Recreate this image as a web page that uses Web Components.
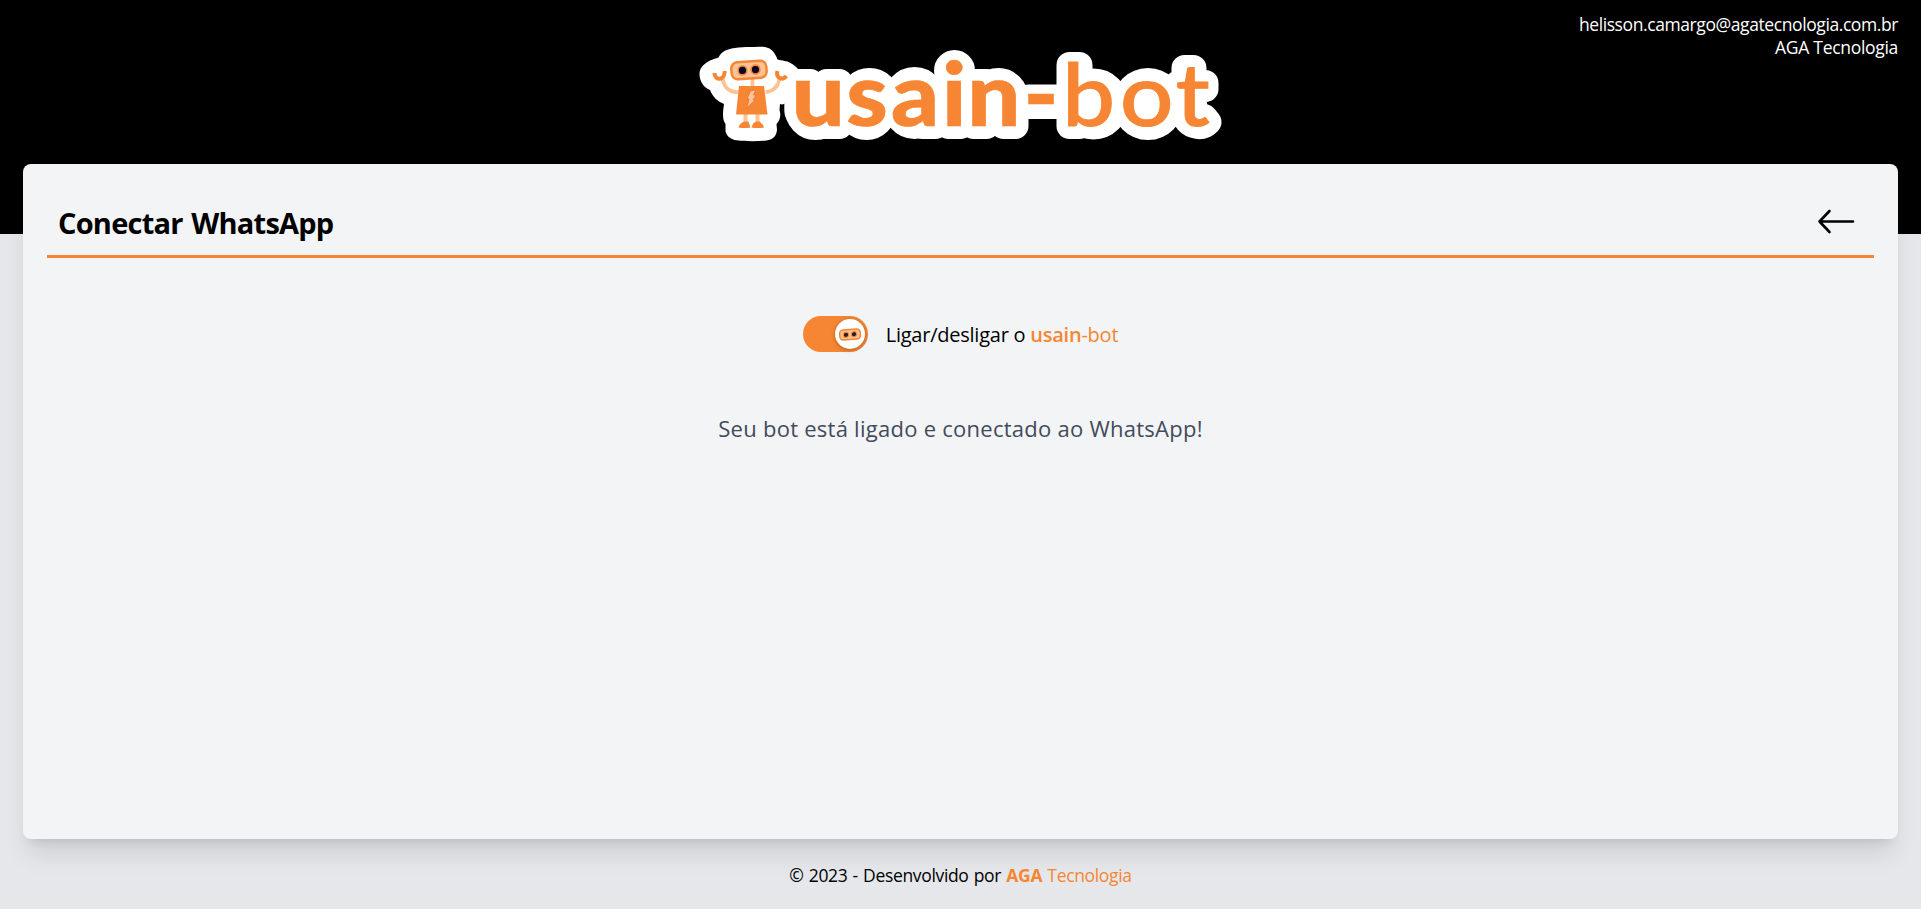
<!DOCTYPE html>
<html lang="pt-BR">
<head>
<meta charset="utf-8">
<title>usain-bot</title>
<style>
html, body { margin: 0; height: 100%; }
body { font-family: "Open Sans", "Noto Sans", sans-serif; background: #e5e7eb; color: #000; overflow: hidden; }
.semi { font-weight: 600; }
</style>
</head>
<body>
<usain-app>
  <user-info slot="user"><span>helisson.camargo@agatecnologia.com.br</span><span slot="company">AGA Tecnologia</span></user-info>
  <usain-logo slot="logo"></usain-logo>
  <page-card>
    <span slot="title">Conectar WhatsApp</span>
    <bot-switch>Ligar/desligar o <brand-name><b class="semi" slot="strong">usain</b>-bot</brand-name></bot-switch>
    <status-message>Seu bot está ligado e conectado ao WhatsApp!</status-message>
  </page-card>
  <page-footer slot="footer">© 2023 - Desenvolvido por <brand-name><b slot="strong">AGA</b> Tecnologia</brand-name></page-footer>
</usain-app>
<script>
const define = (name, html) => customElements.define(name, class extends HTMLElement {
  constructor() {
    super();
    const t = document.createElement('template');
    t.innerHTML = html;
    this.attachShadow({ mode: 'open' }).append(t.content.cloneNode(true));
  }
});

define('usain-app', `
<style>
:host { display: flex; flex-direction: column; height: 909px; box-sizing: border-box; padding: 0 23px;
  background: linear-gradient(#000 234px, #e5e7eb 234px); }
header { display: grid; grid-template-columns: 1fr 524px 1fr; height: 164px; flex: none; }
.logo { grid-column: 2; padding-top: 46px; }
.user { padding-top: 13px; }
main { display: flex; height: 675px; flex: none; }
footer { flex: 1; }
</style>
<header><div class="logo"><slot name="logo"></slot></div><div class="user"><slot name="user"></slot></div></header>
<main><slot></slot></main>
<footer><slot name="footer"></slot></footer>`);

define('user-info', `
<style>
:host { display: flex; flex-direction: column; align-items: flex-end; color: #fff; font-size: 17.500px; line-height: 23px; white-space: nowrap; }
.mail { letter-spacing: -.41px; }
.company { letter-spacing: -.3px; }
</style>
<div class="mail"><slot></slot></div><div class="company"><slot name="company"></slot></div>`);

define('usain-logo', `
<style>
:host { display: block; height: 96px; }
svg { display: block; overflow: visible; }
text { font-family: Lato, sans-serif; font-size: 87px; fill: #f68633; stroke: #f68633; }
.bold { font-weight: 900; stroke-width: .6; }
.light { font-weight: 500; stroke-width: 1; }
</style>
<svg width="524" height="96" viewBox="698.500 46 524 96">
  <g fill="#fff" stroke="#fff" stroke-width="26" stroke-linejoin="round">
    <path d="M797 82h13v30h-13zM826 82h13v44h-13z"/><ellipse cx="815" cy="108" rx="18" ry="19"/>
    <ellipse cx="869" cy="97" rx="17" ry="16"/><ellipse cx="866" cy="110" rx="17" ry="17"/>
    <ellipse cx="914" cy="103" rx="20" ry="23"/><path d="M922 97h13v29h-13z"/>
    <circle cx="954" cy="70.500" r="7.500"/><path d="M948 82h12v44h-12z"/>
    <path d="M973 82h13v44h-13zM1003 101h12v25h-12z"/><ellipse cx="998" cy="99" rx="17" ry="18"/>
    <path d="M1028 97.500h28v8.500h-28z"/><path d="M1069 65h10v61h-10z"/><circle cx="1093" cy="104" r="22.500"/>
    <circle cx="1147.500" cy="104" r="23"/>
    <path d="M1184 68h9v15h12v6h-12l1 26q2 6 10 2l4 5q-5 5-11 4-13-2-13-15V89h-6v-6h6z"/>
  </g>
  <path fill="#fff" d="M699 74C699 69 702 65 707 62C712 59 714 59 718 57.500C720 53 724 50 731 48.500C740 47 752 47 762 46.800C769 47 774 51 777 59.500C782 61 786 60.500 790 63C794 65 797 68 799 71L799 100L787 102C784 104 782 105 779.500 104L779 110C781 116 779 121 776 124L776.500 130C776 135 773 140 766 140.500C756 141.500 744 141.500 734 140C729 138 726 136 725 131L725 124C722 120 722 114 723.500 104C718 102 712 97 709.500 90C704 88 699 82 699 74Z"/>
  <g fill="none">
    <path d="M722 79c2 9 8 14 16 13M777 84c-2 5-7 8-12 8M752 78v8" stroke="#fdc397" stroke-width="3.800"/>
    <path d="M775 88c3-3 3-6 4-10" stroke="#fdc397" stroke-width="3.500"/>
    <path d="M745 114v10M757 114v10" stroke="#fdc397" stroke-width="4"/>
    <path d="M714 73c0 8 11 8 10-2M777 71c-2 7 5 10 9 5" stroke="#f68633" stroke-width="4"/>
    <path d="M738.500 86h25l3.500 28.500h-31.500zM738 127.500c1-4 5-6 6-6h4l2 6q-6 1-12 0zM751 127.500c1-4 3-6 5-6h3q4 3 4.500 6-6 1-12.500 0z" fill="#f68633"/>
    <path d="m750 91 5-1-2 5h2.500l-3 5h2l-8 8 2-9h-2z" fill="#fdc397" stroke="#df6a30" stroke-width=".6"/>
    <g transform="rotate(-4 748.500 70)">
      <rect x="731" y="61.500" width="35" height="17" rx="6" fill="#fdc397" stroke="#f68633" stroke-width="2.500"/>
      <circle cx="742" cy="70" r="4.400" fill="#0c0729" stroke="#f68633" stroke-width="1.600"/>
      <circle cx="755" cy="70" r="4.400" fill="#0c0729" stroke="#f68633" stroke-width="1.600"/>
    </g>
  </g>
  <text y="126" transform="scale(1.080 1)"><tspan class="bold" x="732.500 783.200 824.500 871.800 895.200">usain</tspan><tspan class="bold" x="947.200">-</tspan><tspan class="light" x="983 1036.600 1088.200">bot</tspan></text>
</svg>`);

define('page-card', `
<style>
:host { display: flex; flex-direction: column; flex: 1; box-sizing: border-box; padding: 24px; background: #f3f4f6; border-radius: 8px;
  box-shadow: 0 20px 25px -5px rgba(0,0,0,.1), 0 8px 10px -6px rgba(0,0,0,.1); }
.bar { display: flex; justify-content: space-between; height: 67px; border-bottom: 3px solid #f68633; padding: 0 19px 0 11px; }
h1 { margin: 12px 0 0; font-size: 29px; line-height: 46px; font-weight: 700; letter-spacing: -.78px; word-spacing: 2px; white-space: nowrap; }
svg { margin-top: 21px; }
.body { display: flex; flex-direction: column; align-items: center; padding-top: 58px; gap: 60px; }
</style>
<div class="bar"><h1><slot name="title"></slot></h1>
<svg width="38" height="26" viewBox="0 0 38 26" fill="none" stroke="#000" stroke-width="2.600" stroke-linecap="round" stroke-linejoin="round"><path d="M36 12.500H2.500M12.500 2 2.500 12.500 12.500 23"/></svg></div>
<div class="body"><slot></slot></div>`);

define('bot-switch', `
<style>
:host { display: flex; align-items: center; gap: 18px; height: 36px; font-size: 20px; line-height: 36px; letter-spacing: -.24px; white-space: nowrap; }
.track { display: flex; justify-content: flex-end; width: 65px; height: 36px; border-radius: 18px; background: #f68633; box-sizing: border-box; padding: 3px; }
.knob { width: 30px; height: 30px; border-radius: 50%; background: #fff; box-shadow: 0 1px 4px rgba(0,0,0,.3); }
.label { padding-top: 1px; }
svg { display: block; }
</style>
<div class="track"><div class="knob"><svg width="30" height="30" viewBox="0 0 30 30"><g transform="rotate(-4 15 15.500)">
<rect x="4.700" y="10.500" width="20.600" height="10" rx="3.500" fill="#fdc397" stroke="#f68633" stroke-width="1.500"/>
<circle cx="11" cy="15.500" r="2.600" fill="#2c1b20" stroke="#f68633"/><circle cx="19" cy="15.500" r="2.600" fill="#2c1b20" stroke="#f68633"/></g></svg></div></div>
<div class="label"><slot></slot></div>`);

define('brand-name', `
<style>
:host { display: inline; color: #f68633; }
</style><slot name="strong"></slot><slot></slot>`);

define('status-message', `
<style>
:host { display: block; color: #434b5b; font-size: 22px; line-height: 32px; letter-spacing: .26px; white-space: nowrap; }
</style><slot></slot>`);

define('page-footer', `
<style>
:host { display: block; text-align: center; padding-top: 23px; font-size: 17.500px; line-height: 26px; letter-spacing: -.34px; word-spacing: 1px; white-space: nowrap; }
</style><slot></slot>`);
</script>
</body>
</html>
